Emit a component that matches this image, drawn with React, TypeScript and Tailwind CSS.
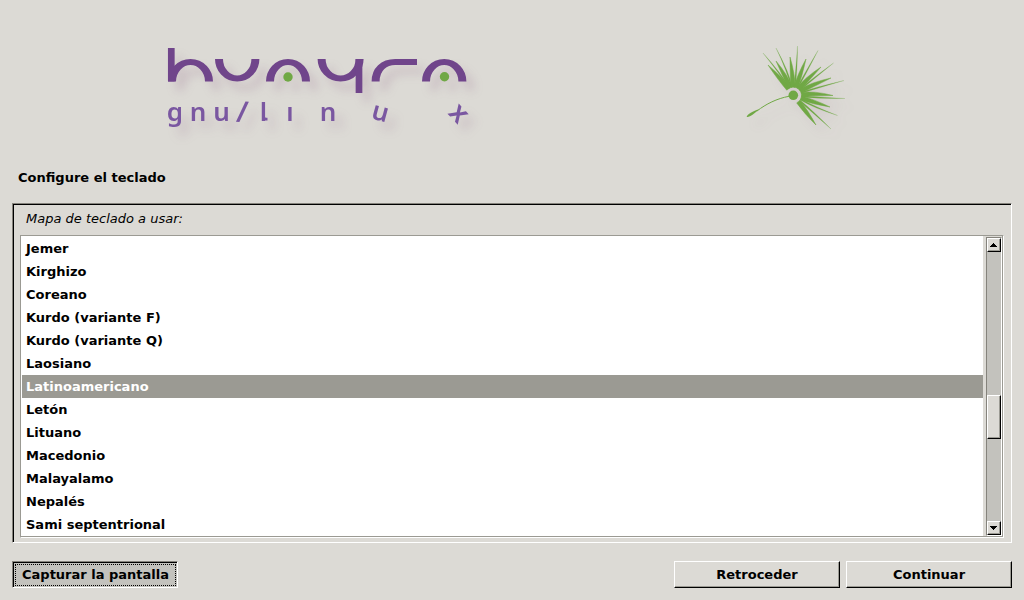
import { useState } from 'react';

const LAYOUTS = [
  'Jemer',
  'Kirghizo',
  'Coreano',
  'Kurdo (variante F)',
  'Kurdo (variante Q)',
  'Laosiano',
  'Latinoamericano',
  'Letón',
  'Lituano',
  'Macedonio',
  'Malayalamo',
  'Nepalés',
  'Sami septentrional',
];

const CENTER = { x: 58.3, y: 59.3 };

// Tips of the seed head bristles, clockwise from the upper left.
const BRISTLES: { x: number; y: number; thin?: boolean }[] = [
  { x: 33, y: 29 },
  { x: 28, y: 17, thin: true },
  { x: 41, y: 25 },
  { x: 41, y: 12, thin: true },
  { x: 55, y: 21 },
  { x: 62.5, y: 10, thin: true },
  { x: 71, y: 23 },
  { x: 83, y: 14.5, thin: true },
  { x: 86, y: 31 },
  { x: 98.5, y: 27, thin: true },
  { x: 96, y: 42 },
  { x: 109, y: 44.5, thin: true },
  { x: 98, y: 59.5 },
  { x: 110, y: 62.5, thin: true },
  { x: 95, y: 71 },
  { x: 102.5, y: 79.5, thin: true },
  { x: 81, y: 89 },
  { x: 96, y: 93, thin: true },
];

// Angle on the inner ring from which each bristle grows, in the same order.
const ROOTS = [-128, -120, -112, -102, -92, -82, -72, -61, -50, -40, -30, -18, -6, 6, 18, 30, 52, 40];

function polar(deg: number, r: number) {
  const a = (deg * Math.PI) / 180;
  return `${(CENTER.x + r * Math.cos(a)).toFixed(2)} ${(CENTER.y + r * Math.sin(a)).toFixed(2)}`;
}

function bristle(tip: { x: number; y: number; thin?: boolean }, i: number) {
  const base = ROOTS[i];
  const spread = tip.thin ? 5 : 14;
  const waist = tip.thin ? 2 : 7;
  const reach = tip.thin ? 24 : 21;
  return `M${polar(base - spread, 8.3)} Q${polar(base - waist, reach)} ${tip.x} ${tip.y} Q${polar(base + waist, reach)} ${polar(base + spread, 8.3)} Z`;
}

function Wordmark() {
  return (
    <svg
      viewBox="0 0 320 110"
      className="h-[110px] w-80 shrink-0 overflow-visible drop-shadow-[8px_9px_5px_rgba(125,70,115,0.18)]"
      role="img"
      aria-label="Huayra gnu/linux"
    >
      <g transform="scale(4 3)" fill="none" stroke="#70458b" strokeWidth="2">
        <path d="M3 15.17A4.62 6.5 0 0 1 12.25 15.17" />
        <path d="M14.75 7.67A4.55 6.5 0 0 0 23.85 7.67" />
        <path d="M27.5 15.17A4.5 6.5 0 0 1 36.5 15.17" />
        <path d="M40.4 7.67A4.75 6.5 0 0 0 49.9 7.67" />
        <path d="M53.9 15.17C53.9 11 56 8.67 58.8 8.67H64.25" />
        <path d="M66.5 15.17A4.55 6.5 0 0 1 75.6 15.17" />
      </g>
      <path d="M11.3 12V45.5M199 23V57" stroke="#70458b" strokeWidth="6.7" />
      <circle cx="128" cy="41" r="4.7" fill="#70a845" />
      <circle cx="284.5" cy="40.7" r="4.7" fill="#70a845" />
      <g
        fill="#7a57a1"
        fontFamily="'Noto Sans', sans-serif"
        fontSize="26"
        fontWeight="600"
        textAnchor="middle"
      >
        <text x="15" y="84.5">g</text>
        <text x="38" y="84.5">n</text>
        <text x="61.5" y="84.5">u</text>
        <text x="82.5" y="86" fontSize="29" transform="rotate(5 82.5 76)">/</text>
        <text x="103.5" y="84.5">l</text>
        <text x="130" y="84.5">ı</text>
        <text x="168" y="84.5">n</text>
        <text x="220" y="84.5" transform="rotate(15 220 78)">u</text>
        <text x="298" y="85.5" fontSize="28" transform="rotate(47 298 78)">x</text>
      </g>
      <path d="M103.5 80.5Q103.5 83.3 107.5 83.2" fill="none" stroke="#7a57a1" strokeWidth="2.8" />
    </svg>
  );
}

function SeedHead() {
  return (
    <svg
      viewBox="0 0 120 100"
      className="h-[100px] w-[120px] shrink-0 overflow-visible drop-shadow-[8px_9px_5px_rgba(125,70,115,0.1)]"
      role="img"
      aria-label="Panadero"
    >
      <g fill="#70a845">
        {BRISTLES.map((tip, i) => (
          <path
            key={i}
            d={bristle(tip, i)}
            stroke="#70a845"
            strokeWidth={tip.thin ? 0.2 : 0.5}
            strokeLinejoin="round"
          />
        ))}
        <circle cx={CENTER.x} cy={CENTER.y} r="4.8" />
        <path d="M11.7 81C12 78.3 17 75.5 24 73.3C20 77.3 14.5 81.7 11.7 81Z" />
      </g>
      <path d="M22 75C31 68 42 62.5 54 60.3" fill="none" stroke="#70a845" strokeWidth="1" />
    </svg>
  );
}

const RAISED =
  'border border-t-white border-l-white border-r-black border-b-black shadow-[inset_-1px_-1px_0_#9b9a93]';

function Scrollbar() {
  return (
    <div className="flex w-4 flex-col border border-t-[#85837c] border-r-white border-b-white border-l-[#85837c] bg-[#c3c2bd]">
      <button
        aria-label="Subir"
        className={`flex h-[14px] shrink-0 items-center justify-center bg-[#dcdad5] pr-px ${RAISED}`}
      >
        <svg viewBox="0 0 7 4" className="h-1 w-[7px]" shapeRendering="crispEdges">
          <path d="M3 0h1v1h1v1h1v1h1v1H0V3h1V2h1V1h1z" />
        </svg>
      </button>
      <div className="grow-[143]" />
      <div className={`h-11 shrink-0 bg-[#dcdad5] ${RAISED}`} />
      <div className="grow-[82]" />
      <button
        aria-label="Bajar"
        className={`flex h-[14px] shrink-0 items-center justify-center bg-[#dcdad5] pr-px ${RAISED}`}
      >
        <svg viewBox="0 0 7 4" className="h-1 w-[7px]" shapeRendering="crispEdges">
          <path d="M3 4h1V3h1V2h1V1h1V0H0v1h1v1h1v1h1z" />
        </svg>
      </button>
    </div>
  );
}

export default function App() {
  const [selected, setSelected] = useState('Latinoamericano');

  return (
    <div className="flex min-h-screen flex-col bg-[#dcdad5] px-3 pb-3 font-['DejaVu_Sans',sans-serif] text-[13px] leading-4 text-black">
      <header className="flex justify-between pt-9 pr-[157px] pl-[148px]">
        <Wordmark />
        <SeedHead />
      </header>

      <h1 className="mt-6 px-1.5 font-bold">Configure el teclado</h1>

      <main className="mt-[17px] flex grow flex-col border border-t-[#85837c] border-r-white border-b-white border-l-[#85837c]">
        <div className="flex grow flex-col border-t border-l border-black pr-[7px] pb-1 pl-1.5">
          <p id="keymap-label" className="mt-1.5 px-1.5 italic">
            Mapa de teclado a usar:
          </p>
          <div className="mt-2 flex grow border border-t-[#9b9a93] border-r-white border-b-white border-l-[#9b9a93]">
            <div className="flex grow border-r border-b border-[#9b9a93] pt-px">
              <ul
                role="listbox"
                aria-labelledby="keymap-label"
                className="mr-[3px] -mt-px grow bg-white pt-px pl-px font-bold"
              >
                {LAYOUTS.map((name) => (
                  <li
                    key={name}
                    role="option"
                    aria-selected={name === selected}
                    onClick={() => setSelected(name)}
                    className={`h-[23px] px-1 leading-[23px] ${name === selected ? 'bg-[#9b9a93] text-white' : ''}`}
                  >
                    {name}
                  </li>
                ))}
              </ul>
              <Scrollbar />
            </div>
          </div>
        </div>
      </main>

      <footer className="mt-[18px] flex gap-1.5 font-bold">
        <button className="mr-auto h-[27px] w-[166px] border border-t-[#85837c] border-r-white border-b-white border-l-[#85837c] bg-[#c3c2bd]">
          <span className="flex h-full items-center border-t border-l border-black p-px">
            <span className="flex h-full grow items-center justify-center border border-dotted border-black">
              Capturar la pantalla
            </span>
          </span>
        </button>
        <button className={`h-[27px] w-[166px] ${RAISED}`}>Retroceder</button>
        <button className={`h-[27px] w-[166px] ${RAISED}`}>Continuar</button>
      </footer>
    </div>
  );
}
